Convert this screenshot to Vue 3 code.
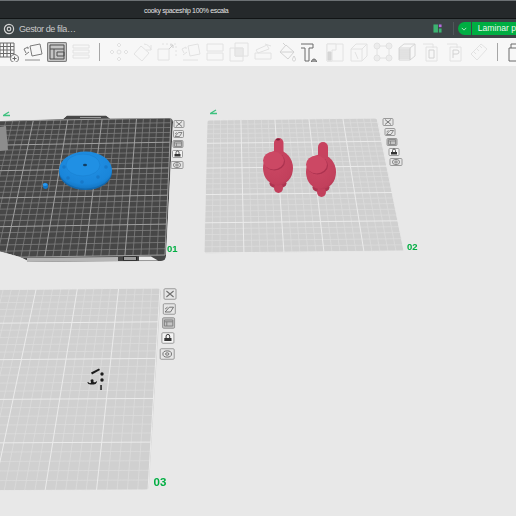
<script setup>
const line = '#6f6f6f'
const off = '#e2e2e2'

// every toolbar icon is a list of [path, stroke, fill]
const tools = [
  { parts: [['M1 1h14v14H1zM1 4.500h14M1 8h14M1 11.500h14M4.500 1v14M8 1v14M11.500 1v14', '#6a6a6a'], ['M15.500 12.500a4 4 0 1 0 .01 0z', '#6a6a6a', '#f6f6f6'], ['M15.500 14.500v4M13.500 16.500h4', '#6a6a6a']] },
  { parts: [['M7 4l10-2 2 10-10 2z', '#7a7a7a', '#f6f6f6'], ['M1 7l4-2v2M1 7l2 4M6 10l-4 3', '#7a7a7a'], ['M2 18h15', '#8e8e8e']] },
  { active: true, parts: [['M3 3h14v14H3zM3 7h14M7 7v10M10 10h7v4h-7z', '#4f4f4f']] },
  { parts: [['M2 3h16v3H2zM2 8h16v3H2zM2 13h16v3H2z', off]] },
  { divider: true },
  { parts: [['M10 1l2 2-2 2-2-2zM10 15l2 2-2 2-2-2zM1 10l2-2 2 2-2 2zM15 10l2-2 2 2-2 2zM8 10a2 2 0 1 0 4 0 2 2 0 1 0-4 0', off]] },
  { parts: [['M8 4l8 7-7 8-8-7z', off], ['M11 2a8 8 0 0 1 7 6M18 3v5h-5', off]] },
  { parts: [['M1 7h11v11H1z', off], ['M5 2h14v14', off, 'none', '2 2'], ['M12 7l4-4M13 3h3v3', '#cfcfcf']] },
  { parts: [['M7 4l10-2 2 10-10 2z', off], ['M1 7l4-2v2M1 7l2 4M6 10l-4 3', off], ['M2 18h15', off]] },
  { parts: [['M2 2h16v7H2zM2 11h16v7H2z', off]] },
  { parts: [['M6 1h13v13H6zM1 6h13v13H1z', off], ['M6 6h8v8H6z', off, '#e9e9e9']] },
  { parts: [['M2 11h16v6H2zM3 8l11-5 2 4-11 4z', off], ['M12 2l6 2', off]] },
  { parts: [['M9 3l8 7-6 7-8-7zM3 10h14M6 1l3 3', '#d2d2d2'], ['M17 14c-2 3-2 5 0 5s2-2 0-5z', '#d2d2d2']] },
  { parts: [['M-1 2h13v4H8v13H4V6H-1z', '#6a6a6a'], ['M13 17a2.500 3 0 1 0 .01 0z', '#6a6a6a', '#9a9a9a']] },
  { parts: [['M2 2h16v17H2z', off], ['M2 2h9v6H7v11H2z', off, '#f6f6f6'], ['M3 10h3v8H3z', '#d4d4d4', '#d6d6d6']] },
  { parts: [['M2 7l5-5h11v12l-5 5H2zM2 7h11v12M13 7l5-5M6 10l3 7', off]] },
  { parts: [['M4 4h12v12H4z', off], ['M1 4a3 3 0 1 0 6 0 3 3 0 1 0-6 0M13 4a3 3 0 1 0 6 0 3 3 0 1 0-6 0M1 16a3 3 0 1 0 6 0 3 3 0 1 0-6 0M13 16a3 3 0 1 0 6 0 3 3 0 1 0-6 0', off, '#ececec']] },
  { parts: [['M2 6l5-4h11v12l-5 4H2z', '#d6d6d6'], ['M2 8h11M2 10h11M2 12h11M2 14h11M2 16h11M13 6v12', '#cccccc'], ['M2 6h11l5-4', '#d6d6d6']] },
  { parts: [['M2 2h10v4', off], ['M5 5h11v14H5z', off], ['M8 8h5v8H8z', '#d2d2d2']] },
  { parts: [['M2 2h10v4', off], ['M5 5h11v14H5z', off], ['M8 16V8h4a2 2 0 0 1 0 4H8', '#d2d2d2']] },
  { parts: [['M2 12L12 2l6 5L8 18z', off], ['M5 10l2 2M8 7l2 2M11 4l2 2', off]] },
  { divider: true },
  { parts: [['M2 6h16v13H2zM4 6V2h9', '#6a6a6a']] },
]

// homography from the unit square onto a plate's four corners
function project(q) {
  const [[x0, y0], [x1, y1], [x2, y2], [x3, y3]] = q
  const dx1 = x1 - x2, dx2 = x3 - x2, dx3 = x0 - x1 + x2 - x3
  const dy1 = y1 - y2, dy2 = y3 - y2, dy3 = y0 - y1 + y2 - y3
  const den = dx1 * dy2 - dx2 * dy1
  const g = (dx3 * dy2 - dx2 * dy3) / den
  const h = (dx1 * dy3 - dx3 * dy1) / den
  return (u, v) => {
    const w = g * u + h * v + 1
    return [
      ((x1 - x0 + g * x1) * u + (x3 - x0 + h * x3) * v + x0) / w,
      ((y1 - y0 + g * y1) * u + (y3 - y0 + h * y3) * v + y0) / w,
    ]
  }
}

function gridPaths(q) {
  const p = project(q)
  let minor = ''
  let major = ''
  for (let i = 0; i <= 25; i++) {
    const t = i / 25
    const [ax, ay] = p(t, 0), [bx, by] = p(t, 1)
    const [cx, cy] = p(0, t), [dx, dy] = p(1, t)
    const seg = `M${ax.toFixed(1)} ${ay.toFixed(1)}L${bx.toFixed(1)} ${by.toFixed(1)}M${cx.toFixed(1)} ${cy.toFixed(1)}L${dx.toFixed(1)} ${dy.toFixed(1)}`
    if (i % 5 === 0) major += seg
    else minor += seg
  }
  return { minor, major }
}

const plates = [
  {
    id: 'p1', fill: '#474747', minorColor: '#7f7f7f', majorColor: '#a0a0a0',
    shape: 'M-2 121L63 119L67 115.500H106L110 118.500L169 118Q173 118 173 122L166 256Q166 261 161 261L30 262L20 257L-2 251Z',
    grid: gridPaths([[-1, 121], [171, 118], [165, 255], [-35, 258]]),
  },
  {
    id: 'p2', fill: '#d0d0d0', minorColor: '#dcdcdc', majorColor: '#ebebeb',
    shape: 'M210 120L374 118Q377 118 378 121L404 251L208 253.500Q203 253.500 204 249L207 123Q207 120 210 120Z',
    grid: gridPaths([[207, 120], [377, 118], [404, 251], [204, 253]]),
  },
  {
    id: 'p3', fill: '#d0d0d0', minorColor: '#dcdcdc', majorColor: '#ebebeb',
    shape: 'M-50 290L157 288Q161 288 161 292L149 487Q149 490 145 490L-110 491Z',
    grid: gridPaths([[-46, 290], [160, 288], [148, 490], [-108, 491]]),
  },
]

const plateButtons = [
  { x: 179, step: -0.5, ys: [124, 134, 144, 154, 165], w: 10, h: 7 },
  { x: 388, step: 2, ys: [122, 132, 142, 152, 162], w: 10, h: 7 },
  { x: 170, step: -0.7, ys: [294, 309, 323, 338, 354], w: 12, h: 10.500 },
]

const buttons = plateButtons.flatMap((col, c) =>
  col.ys.map((y, i) => ({
    key: `${c}-${i}`,
    x: col.x + col.step * i,
    y,
    w: i === 4 ? col.w + 2 : col.w,
    h: col.h,
    s: col.w / 10,
    kind: i,
  })),
)

const bumps = [[64, 167], [68, 178], [82, 182], [98, 177], [106, 167]]
</script>

<template>
  <div class="app">
    <div class="titlebar">cooky spaceship 100% escala</div>

    <div class="queuebar">
      <svg class="queue-icon" viewBox="0 0 12 12" width="12" height="12">
        <circle cx="6" cy="6" r="4.600" fill="none" stroke="#d4d4d4" stroke-width="1.200" />
        <circle cx="6" cy="6" r="1.800" fill="none" stroke="#d4d4d4" stroke-width="1.200" />
      </svg>
      <span class="queue-label">Gestor de fila…</span>
      <div class="spacer"></div>
      <svg class="layout-icon" viewBox="0 0 10 10" width="9" height="9">
        <rect x="0.500" y="0.500" width="5" height="9" fill="#3cb371" />
        <rect x="6.500" y="0.500" width="3" height="3" fill="#b76be0" />
        <rect x="6.500" y="5" width="3" height="4.500" fill="#3cb371" />
      </svg>
      <div class="bar-divider"></div>
      <div class="slice">
        <span class="slice-arrow">
          <svg viewBox="0 0 8 5" width="6" height="4">
            <path d="M1 1l3 3 3-3" fill="none" stroke="#e8f8ee" stroke-width="1" />
          </svg>
        </span>
        <span class="slice-main">Laminar p</span>
      </div>
    </div>

    <div class="toolbar">
      <template v-for="(tool, i) in tools" :key="i">
        <div v-if="tool.divider" class="tool-divider"></div>
        <div v-else class="tool" :class="{ active: tool.active }">
          <svg viewBox="0 0 20 20" width="20" height="20">
            <path
              v-for="(part, j) in tool.parts"
              :key="j"
              :d="part[0]"
              :stroke="part[1]"
              :fill="part[2] || 'none'"
              :stroke-dasharray="part[3]"
              stroke-width="1"
            />
          </svg>
        </div>
      </template>
    </div>

    <svg class="scene" viewBox="0 66 516 450" width="516" height="450">
      <defs>
        <radialGradient id="discFill" cx="0.5" cy="0.35" r="0.7">
          <stop offset="0" stop-color="#2191e6" />
          <stop offset="0.75" stop-color="#1a86da" />
          <stop offset="1" stop-color="#1170bb" />
        </radialGradient>
        <radialGradient id="bodyFill" cx="0.4" cy="0.35" r="0.8">
          <stop offset="0" stop-color="#cb4763" />
          <stop offset="0.75" stop-color="#c2405c" />
          <stop offset="1" stop-color="#a8304c" />
        </radialGradient>
        <clipPath v-for="plate in plates" :id="plate.id" :key="plate.id">
          <path :d="plate.shape" />
        </clipPath>
        <g id="figure">
          <ellipse cx="0" cy="15.500" rx="8.500" ry="5" fill="#ad3450" />
          <ellipse cx="0.500" cy="20" rx="4.500" ry="5" fill="#c2405c" />
          <ellipse cx="0" cy="0" rx="15" ry="17.500" fill="url(#bodyFill)" />
          <ellipse cx="-3.500" cy="-6.500" rx="10.500" ry="9" fill="#ac3350" />
          <ellipse cx="-4.500" cy="-7.500" rx="10.500" ry="9" fill="#cc4864" />
        </g>
      </defs>

      <g v-for="plate in plates" :key="plate.id" :clip-path="`url(#${plate.id})`">
        <path :d="plate.shape" :fill="plate.fill" />
        <path :d="plate.grid.minor" :stroke="plate.minorColor" stroke-width="0.800" fill="none" />
        <path :d="plate.grid.major" :stroke="plate.majorColor" stroke-width="1" fill="none" />
      </g>

      <!-- first plate: tab, label strip and side print -->
      <path d="M0 127l6-1 2 24-8 1z" fill="#8d8d8d" />
      <path d="M80 117h21v1H80z" fill="#9a9a9a" />
      <path d="M27 258l91-1v4l-91 1z" fill="#b5b5b5" />
      <path d="M123 256.500h14v4h-14z" fill="#242424" />
      <path d="M124 257h12v3h-12z" fill="#9c9c9c" />
      <path d="M139 256.500h12l7 4h-19z" fill="#ececec" />

      <!-- edit marks above plates -->
      <path d="M3 115.500h7M4 115l5-3" stroke="#3fc17f" stroke-width="1.300" fill="none" />
      <path d="M210 113.500h7M211 113l5-3" stroke="#3fc17f" stroke-width="1.300" fill="none" />

      <!-- blue disc -->
      <ellipse cx="85.500" cy="172" rx="26.500" ry="18" fill="#1269b0" />
      <ellipse cx="85.500" cy="170" rx="26.500" ry="18.500" fill="url(#discFill)" />
      <ellipse cx="83" cy="165" rx="17" ry="11" fill="#2090e4" stroke="#1a80d0" stroke-width="0.600" />
      <circle v-for="(d, i) in bumps" :key="i" :cx="d[0]" :cy="d[1]" r="1.800" fill="#1778c8" />
      <ellipse cx="85" cy="165" rx="2" ry="1.200" fill="#123e63" />
      <ellipse cx="45.500" cy="186" rx="2.500" ry="3" fill="#1276c6" />
      <ellipse cx="45" cy="184.500" rx="2.200" ry="1.600" fill="#2a97ec" />

      <!-- pink figures, necks go under the bodies -->
      <rect x="274" y="138" width="9.500" height="24" rx="4.700" fill="#c8425f" />
      <rect x="318" y="142" width="10" height="22" rx="5" fill="#c8425f" />
      <use href="#figure" x="278" y="168" />
      <use href="#figure" x="321" y="172" />
      <ellipse cx="278" cy="139.500" rx="2" ry="1" fill="#7d2239" />

      <!-- black pieces -->
      <g fill="#1c1c1c">
        <path d="M91 372.500l8-4 1 1.500-8 4.500z" />
        <circle cx="102" cy="374" r="1.700" />
        <circle cx="102" cy="380" r="1.700" />
        <path d="M100.300 385h1.500v5h-1.500z" />
        <path d="M88 382q2 2 3 0.500l-0.500-2.500q2-1.500 3 0l0 2q2 1 3-1l.5 1q-1 2.500-3.500 2.500h-3q-2.500 0-3.200-2z" />
      </g>

      <!-- side buttons -->
      <g v-for="b in buttons" :key="b.key">
        <rect
          :x="b.x - b.w / 2"
          :y="b.y - b.h / 2"
          :width="b.w"
          :height="b.h"
          rx="1"
          :fill="b.kind === 2 ? '#c4c4c4' : b.kind === 3 ? '#f4f4f4' : '#e6e6e6'"
          stroke="#868686"
          stroke-width="0.800"
        />
        <g :transform="`translate(${b.x} ${b.y}) scale(${b.s})`">
          <path v-if="b.kind === 0" d="M-3-2.500l6 5M3-2.500l-6 5" :stroke="line" stroke-width="0.900" />
          <path v-else-if="b.kind === 1" d="M-3.500 2.500h4.500l2.500-4h-3.500zM-3.500 0l2-1.500" fill="none" :stroke="line" stroke-width="0.800" />
          <path v-else-if="b.kind === 2" d="M-3.500-2.500h7v5h-7zM-3.500-1h7M-1.500-1v3.500" fill="none" stroke="#808080" stroke-width="0.800" />
          <g v-else-if="b.kind === 3">
            <path d="M-1.500 0v-1.500a1.500 1.500 0 0 1 3 0V0" fill="none" stroke="#333" stroke-width="0.800" />
            <path d="M-3 0h6v2.500h-6z" fill="#333" />
          </g>
          <g v-else fill="none" :stroke="line" stroke-width="0.800">
            <ellipse cx="0" cy="0" rx="3.600" ry="2.600" />
            <ellipse cx="0" cy="0" rx="1.400" ry="1" />
          </g>
        </g>
      </g>

      <text x="167" y="252" class="plate-num">01</text>
      <text x="407" y="249.500" class="plate-num">02</text>
      <text x="153.500" y="486" class="plate-num big">03</text>
    </svg>
  </div>
</template>

<style>
html,
body {
  margin: 0;
  background: #e8e8e8;
  overflow: hidden;
}
</style>

<style scoped>
.app {
  width: 516px;
  height: 516px;
  overflow: hidden;
  background: #e8e8e8;
  font-family: "Liberation Sans", sans-serif;
}

.titlebar {
  height: 14px;
  padding-top: 3px;
  padding-left: 144px;
  border-top: 1px solid #6c7174;
  border-bottom: 1px solid #111415;
  background: #25292b;
  color: #e4e4e4;
  font-size: 7px;
  letter-spacing: -0.35px;
  line-height: 14px;
}

.queuebar {
  height: 19px;
  display: flex;
  align-items: center;
  background: #3c4446;
  color: #c9c9c9;
}

.queue-icon {
  margin-left: 3px;
}

.queue-label {
  margin-left: 4px;
  font-size: 9px;
  letter-spacing: -0.4px;
}

.spacer {
  flex: 1;
}

.bar-divider {
  width: 1px;
  height: 13px;
  margin: 0 4px 0 11px;
  background: #4f5759;
}

.slice {
  display: flex;
  height: 13px;
  flex-shrink: 0;
  width: 58px;
  color: #ecf9f1;
  font-size: 8.600px;
  line-height: 13px;
  white-space: nowrap;
}

.slice-arrow {
  width: 13px;
  display: flex;
  align-items: center;
  justify-content: center;
  margin-right: 1px;
  border-radius: 7px 0 0 7px;
  background: #00ae42;
}

.slice-main {
  flex: 1;
  padding-left: 6px;
  background: #00ae42;
}

.toolbar {
  height: 28px;
  display: flex;
  align-items: center;
  gap: 4px;
  margin-left: -1px;
  background: #f7f7f7;
  overflow: hidden;
}

.tool {
  width: 20px;
  height: 20px;
  flex-shrink: 0;
  filter: blur(0.4px);
}

.tool.active {
  background: #c4c4c4;
  border-radius: 2px;
  box-shadow: inset 0 0 0 1px #7d7d7d;
}

.tool svg {
  display: block;
}

.tool-divider {
  width: 1px;
  height: 18px;
  flex-shrink: 0;
  margin: 0 5px 0 4px;
  background: #a6a6a6;
}

.scene {
  display: block;
  filter: blur(0.5px);
}

.plate-num {
  fill: #00ae42;
  font-weight: 700;
  font-size: 9.500px;
}

.plate-num.big {
  font-size: 11.500px;
}
</style>
